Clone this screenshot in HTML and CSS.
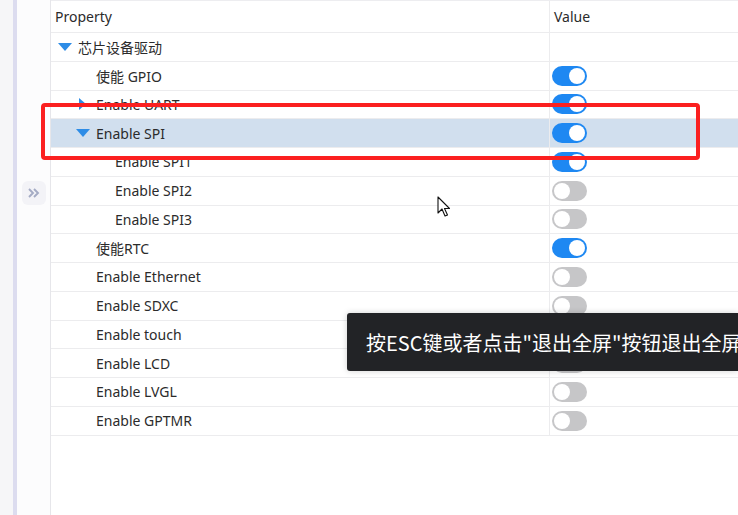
FILE: index.html
```html
<!DOCTYPE html>
<html>
<head>
<meta charset="utf-8">
<link rel="stylesheet" href="styles.css">
</head>
<body>
<div class="app">
  <div class="gutter"></div>
  <div class="rail"></div>
  <div class="side">
    <div class="expand">
      <svg width="14" height="12" viewBox="0 0 14 12"><path d="M2 2 L6 6 L2 10 M7 2 L11 6 L7 10" fill="none" stroke="#a4abc4" stroke-width="1.9"/></svg>
    </div>
  </div>
  <div class="grid">
    <div class="row head"><div class="cell prop">Property</div><div class="cell val">Value</div></div>
    <div class="row"><div class="cell prop l0"><span class="tri down"></span>芯片设备驱动</div><div class="cell val"></div></div>
    <div class="row"><div class="cell prop l1">使能 GPIO</div><div class="cell val"><span class="tg on"></span></div></div>
    <div class="row"><div class="cell prop l1"><span class="tri right"></span>Enable UART</div><div class="cell val"><span class="tg on"></span></div></div>
    <div class="row sel"><div class="cell prop l1"><span class="tri down"></span>Enable SPI</div><div class="cell val"><span class="tg on"></span></div></div>
    <div class="row"><div class="cell prop l2">Enable SPI1</div><div class="cell val"><span class="tg on"></span></div></div>
    <div class="row"><div class="cell prop l2">Enable SPI2</div><div class="cell val"><span class="tg"></span></div></div>
    <div class="row"><div class="cell prop l2">Enable SPI3</div><div class="cell val"><span class="tg"></span></div></div>
    <div class="row"><div class="cell prop l1">使能RTC</div><div class="cell val"><span class="tg on"></span></div></div>
    <div class="row"><div class="cell prop l1">Enable Ethernet</div><div class="cell val"><span class="tg"></span></div></div>
    <div class="row"><div class="cell prop l1">Enable SDXC</div><div class="cell val"><span class="tg"></span></div></div>
    <div class="row"><div class="cell prop l1">Enable touch</div><div class="cell val"><span class="tg"></span></div></div>
    <div class="row"><div class="cell prop l1">Enable LCD</div><div class="cell val"><span class="tg"></span></div></div>
    <div class="row"><div class="cell prop l1">Enable LVGL</div><div class="cell val"><span class="tg"></span></div></div>
    <div class="row"><div class="cell prop l1">Enable GPTMR</div><div class="cell val"><span class="tg"></span></div></div>
  </div>
</div>
<div class="redbox"></div>
<div class="toast"><span class="toast-text">按ESC键或者点击"退出全屏"按钮退出全屏</span></div>
<svg class="cursor" width="14" height="22" viewBox="0 0 14 22"><path d="M1 1 L1 17 L5 13 L8 20 L10.5 19 L7.5 12.5 L12.5 12.5 Z" fill="#fff" stroke="#111" stroke-width="1.1" stroke-linejoin="round"/></svg>
</body>
</html>
```

FILE: styles.css
```css
html, body {
  margin: 0;
  padding: 0;
}
body {
  width: 738px;
  height: 515px;
  overflow: hidden;
  background: #ffffff;
  font-family: "Noto Sans", "Noto Sans CJK SC", sans-serif;
  font-size: 14px;
  color: #2b2b2b;
  position: relative;
}
.app {
  display: flex;
  height: 515px;
}
.gutter {
  width: 13px;
  background: #f6f6f8;
}
.rail {
  width: 4px;
  background: #dcdcef;
}
.side {
  width: 33px;
  background: #fcfcfd;
  display: flex;
  flex-direction: column;
  justify-content: center;
  align-items: center;
  padding-bottom: 129px;
  box-sizing: border-box;
}
.expand {
  width: 24px;
  height: 24px;
  border-radius: 6px;
  background: #f3f3f7;
  display: flex;
  align-items: center;
  justify-content: center;
}
.grid {
  flex: 1;
  border-left: 1px solid #e6e6ea;
  display: flex;
  flex-direction: column;
}
.row {
  display: grid;
  grid-template-columns: 499px 1fr;
  height: 28.75px;
  border-bottom: 1px solid #ececee;
  box-sizing: border-box;
}
.row.head {
  height: 33px;
  border-top: 1px solid #ededf0;
}
.row.sel {
  background: #d1dfee;
}
.cell {
  display: flex;
  align-items: center;
  white-space: nowrap;
}
.prop {
  border-right: 1px solid #ececee;
  padding-left: 4px;
}
.val {
  padding-left: 2px;
}
.head .val {
  padding-left: 4px;
}
.l0 { padding-left: 7px; }
.l1 { padding-left: 45px; }
.l2 { padding-left: 64px; }
.tri {
  display: inline-block;
  width: 0;
  height: 0;
}
.tri.down {
  border-left: 7px solid transparent;
  border-right: 7px solid transparent;
  border-top: 8px solid #2d8ce6;
  margin-right: 6px;
}
.l1 .tri.down {
  margin-left: -20px;
}
.tri.right {
  border-top: 6px solid transparent;
  border-bottom: 6px solid transparent;
  border-left: 7px solid #2d8ce6;
  margin-left: -17px;
  margin-right: 10px;
}
.tg {
  display: inline-block;
  width: 35px;
  height: 20px;
  border-radius: 10px;
  background: #c6c6c8;
  position: relative;
}
.tg::after {
  content: "";
  position: absolute;
  top: 2px;
  left: 2px;
  width: 16px;
  height: 16px;
  border-radius: 50%;
  background: #ffffff;
}
.tg.on {
  background: #1e88f2;
}
.tg.on::after {
  left: 17px;
}
.redbox {
  position: absolute;
  left: 41px;
  top: 103px;
  width: 651px;
  height: 49px;
  border: 4px solid #fb2020;
  border-radius: 4px;
}
.toast {
  position: absolute;
  left: 347px;
  right: 0;
  top: 313px;
  height: 58px;
  box-sizing: border-box;
  padding-left: 19px;
  display: flex;
  align-items: center;
  overflow: hidden;
  background: #222326;
  color: #ffffff;
  border-radius: 3px 0 0 3px;
  font-family: "Noto Sans CJK SC", sans-serif;
  font-size: 20px;
  white-space: nowrap;
  box-shadow: 0 0 6px rgba(0,0,0,0.18);
}
.toast-text {
  flex: none;
}
.cursor {
  position: absolute;
  left: 437px;
  top: 196px;
}
```
